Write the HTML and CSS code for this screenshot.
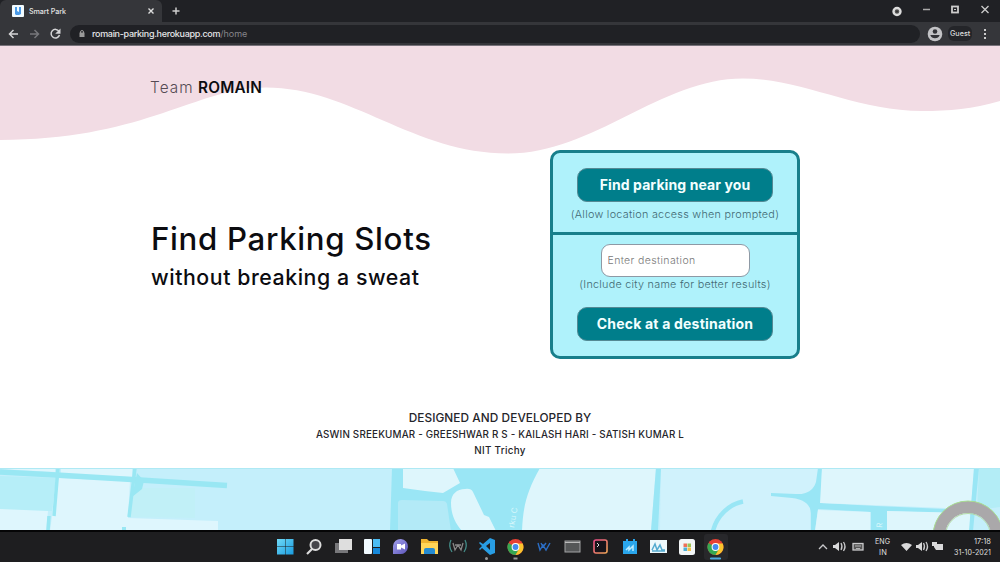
FILE: index.html
```html
<!DOCTYPE html>
<html lang="en">
<head>
<meta charset="utf-8">
<title>Smart Park</title>
<link rel="stylesheet" href="styles.css">
</head>
<body>
<div class="tabs">
  <div class="tab">
    <svg class="favicon" width="12" height="12" viewBox="0 0 12 12"><rect width="12" height="12" rx="1" fill="#f2fbff"/><path d="M3 2h2v4l2 1V2h2v7l-2 1H4L3 9z" fill="#4b9be8"/></svg>
    <span class="tab-title">Smart Park</span>
    <svg width="8" height="8" viewBox="0 0 8 8"><path d="M1.500 1.500l5 5M6.500 1.500l-5 5" stroke="#ddd" stroke-width="1.400"/></svg>
  </div>
  <svg class="plus" width="10" height="10" viewBox="0 0 10 10"><path d="M5 1.500v7M1.500 5h7" stroke="#ccc" stroke-width="1.500"/></svg>
  <svg class="controls" width="108" height="22" viewBox="0 0 108 22"><circle cx="5" cy="11.500" r="3.500" fill="#555" stroke="#ddd" stroke-width="2.400"/><circle cx="5" cy="11.500" r="1" fill="#333"/><path d="M31 9.500h7" stroke="#aaa" stroke-width="1.500"/><rect x="60" y="6.500" width="6" height="6" fill="none" stroke="#ccc" stroke-width="1.800"/><path d="M62 9.500h2" stroke="#ccc"/><path d="M89.500 6l7 7M96.500 6l-7 7" stroke="#ccc" stroke-width="1.300"/></svg>
</div>
<div class="toolbar">
  <svg class="nav" width="64" height="24" viewBox="0 0 64 24"><g fill="none" stroke="#d5d5d7" stroke-width="1.500"><path d="M19 12h-8M14.500 8L10.500 12l4 4"/><path stroke="#77777b" d="M31 12h8M35.500 8l4 4-4 4"/><path d="M60 9.300A4.300 4.300 0 1 0 60.500 13"/></g><path d="M61.500 6.500v5.300h-5.300z" fill="#d5d5d7"/></svg>
  <div class="address">
    <svg width="8" height="9" viewBox="0 0 8 9"><path d="M2.500 4V3a1.500 1.500 0 0 1 3 0v1" fill="none" stroke="#999"/><rect x="1.500" y="3.500" width="5" height="4.500" fill="#999"/></svg>
    <span class="host">romain-parking.herokuapp.com</span><span class="path">/home</span>
  </div>
  <svg class="avatar" width="16" height="16" viewBox="0 0 16 16"><circle cx="8" cy="8" r="7.300" fill="#c3c3c6"/><circle cx="8" cy="5.500" r="2.300" fill="#333338"/><path d="M3.300 9h9.400a5 5 0 0 1-9.400 0z" fill="#333338"/></svg>
  <span class="guest">Guest</span>
  <svg class="dots" width="4" height="12" viewBox="0 0 4 12"><path d="M1 1h2v2H1zM1 5h2v2H1zM1 9h2v2H1z" fill="#ccc"/></svg>
</div>
<main class="page">
  <svg class="wave" width="1000" height="110" viewBox="0 46 1000 110"><path fill="#f2dce4" d="M0 45H1000V101C972 109 950 111 922 111C855 111 802 78.500 743 78.500C660 78.500 594 153.500 508 153.500C413 153.500 351 87.500 266 87.500C196 87.500 145 140 0 140Z"/></svg>
  <header class="brand"><span class="team">Team</span> <b class="name">ROMAIN</b></header>
  <section class="hero">
    <div class="headline">
      <h1 class="title">Find Parking Slots</h1>
      <p class="subtitle">without breaking a sweat</p>
    </div>
    <div class="card">
      <div class="near">
        <button class="btn"><span class="find">Find parking near you</span></button>
        <p class="hint allow">(Allow location access when prompted)</p>
      </div>
      <div class="search">
        <input class="field" placeholder="Enter destination">
        <p class="hint include">(Include city name for better results)</p>
        <button class="btn"><span class="check">Check at a destination</span></button>
      </div>
    </div>
  </section>
  <footer class="credits">
    <p class="designed">DESIGNED AND DEVELOPED BY</p>
    <p class="people">ASWIN SREEKUMAR - GREESHWAR R S - KAILASH HARI - SATISH KUMAR L</p>
    <p class="school">NIT Trichy</p>
  </footer>
  <svg class="map" width="1000" height="62" viewBox="0 468 1000 62">
    <rect y="468" width="1000" height="63" fill="#c4effb"/>
    <path d="M0 476L56 478L52 511H0z" fill="#b6eef8"/>
    <path d="M0 509L48 511L46 531H0zM52 516L56 478L130 481L128 518L218 521V531H50zM0 468H55V472L0 469zM61 468H132V477L61 474z" fill="#def6fd"/>
    <path d="M134 488L195 488L195 518L130 517z" fill="#c1f0f7"/>
    <path d="M0 472L56 475L132 479.500L227 485.500" fill="none" stroke="#99e7f3" stroke-width="5.500"/>
    <path d="M58 468L54 516M49 516L48 531M135 468L129 517" fill="none" stroke="#99e7f3" stroke-width="3.500"/>
    <path d="M137 473L144 481L142 489L132 497zM122 527h4v4h-4z" fill="#99e7f3"/>
    <path d="M392 468H540L522 531H390z" fill="#9ae6f5"/>
    <path d="M398 503Q398 500 402 500L443 501Q446 501 447 504L451 531H398z" fill="#b3eaf7"/>
    <path d="M403 468H453L460 483L443 493L425 491L403 488zM451 503C451 494 457 489 465 489Q471 488 473 492L484 515L489 517L496 531H462C455 523 451 514 451 503zM540 468H656L651 531H522C523 506 527 491 540 468z" fill="#def6fc"/>
    <path d="M661 468H818V486Q818 493 810 497V531H660z" fill="#d0f2fc"/>
    <path d="M656 468H661L658 531H651z" fill="#99e6f5"/>
    <path d="M713 531C717 515 730 504 743 501.500" fill="none" stroke="#99e6f5" stroke-width="4.500"/>
    <path d="M771 493L796 494Q812 495 816 482L818 468H822L821 503L876 506L945 509V513L887 511V531H871V512L818 509L815 531H811V513Q810 500 792 498L771 496z" fill="#99e6f5"/>
    <path d="M822 468H974L971 509L820 503zM818 510L870 512V531H815zM887 511L970 513V531H887z" fill="#def6fc"/>
    <path d="M979 468H1000V507L977 510z" fill="#b3edf6"/>
    <path d="M974 468H979L973 531H969z" fill="#99e6f5"/>
    <path d="M0 468.500H1000" stroke="#aee9f4"/>
    <g fill="#d5f6fb" font-family="Inter, sans-serif" font-size="8"><text transform="translate(514 528) rotate(-80)">rku C</text><text transform="translate(882 528) rotate(-85)">R</text></g>
    <circle cx="968" cy="536" r="29" fill="none" stroke="#aaa8aa" stroke-width="12"/>
    <circle cx="968" cy="536" r="35" fill="none" stroke="#a8dd90" stroke-width="1"/><circle cx="968" cy="536" r="22.500" fill="none" stroke="#b4d9a6" stroke-width="1"/>
  </svg>
</main>
<div class="taskbar">
  <svg width="1000" height="32" viewBox="0 530 1000 32">
    <defs>
      <linearGradient id="win" x2="1" y2="1"><stop stop-color="#70daf7"/><stop offset="1" stop-color="#199bdf"/></linearGradient>
      <linearGradient id="chat" x2="1" y2="1"><stop stop-color="#a3a1ec"/><stop offset="1" stop-color="#5c55b9"/></linearGradient>
      <linearGradient id="ide" x2="1" y2="1"><stop stop-color="#e94c87"/><stop offset="1" stop-color="#efa557"/></linearGradient>
      <g id="chrome"><circle r="8" fill="#e64134"/><path d="M0 0L-7 -4A8 8 0 0 0 0 8L4 2z" fill="#36a852"/><path d="M0 -3.500H7.200A8 8 0 0 1 0 8L3.500 2z" fill="#fbc42d"/><circle r="3.900" fill="#fff"/><circle r="2.900" fill="#438bed"/></g>
    </defs>
    <rect y="530" width="1000" height="2" fill="#050506"/>
    <path d="M277 539h8v7h-8zM285.500 539h8v7h-8zM277 546.500h8v8h-8zM285.500 546.500h8v8h-8z" fill="url(#win)"/>
    <circle cx="315.500" cy="545" r="5" fill="#45454a" stroke="#ddd" stroke-width="2"/><path d="M312 549l-5 5" stroke="#ddd" stroke-width="2.200"/>
    <rect x="335" y="543" width="13" height="10" fill="#77777a"/><rect x="339" y="539" width="13" height="11" fill="#dedede"/>
    <rect x="364" y="539" width="8" height="15" rx="1" fill="#f1faff"/><rect x="373" y="539" width="7" height="8" fill="#4dbdf4"/><rect x="373" y="548" width="7" height="6" fill="#1689db"/>
    <path d="M393 554V546A7.500 7.500 0 1 1 400 554z" fill="url(#chat)"/><path d="M397 544h4v1.500l4-2v6l-4-2v2h-4z" fill="#fff"/>
    <path d="M421 539h6l2 2h9v13h-17z" fill="#eeb330"/><path d="M421 543h17v11h-17z" fill="#ffd558"/><path d="M424 554v-4q0-2 2-2h7q2 0 2 2v4z" fill="#258bd1"/>
    <g fill="none" stroke="#438c88" stroke-width="1.300"><path d="M451 540q-3 6 1 12M465 540q3 6-1 12"/><path stroke="#888" d="M453 543l2 7 3-5 3 5 2-7M455 545h6"/></g>
    <path d="M490 538l5 2v13l-5 2-8-7-2 2-1-1 3-3-3-3 1-1 3 2zm0 5l-4 3 4 4z" fill="#289de3"/><circle cx="486.500" cy="558.500" r="1.500" fill="#999"/>
    <use href="#chrome" x="515.500" y="547"/><path d="M513.500 558.500h4" stroke="#999" stroke-width="2"/>
    <path d="M538 543l2 7 3-5 3 5 4-7M541 543l2 4 3-4" fill="none" stroke="#2b6dc4" stroke-width="1.400"/>
    <rect x="565" y="541" width="15" height="11" fill="#555758" stroke="#a2a3a4"/><path d="M565 542.500h15" stroke="#bbb"/>
    <rect x="594" y="540" width="13" height="13" rx="2" fill="#17131a" stroke="url(#ide)" stroke-width="1.600"/><path d="M597 543l2 2-2 2" stroke="#ddd" fill="none"/>
    <path d="M623 541h3v-2h2v2h5v-2h2v2h2v13h-14z" fill="#2aa6ec"/><path d="M626 550l3-3v3l4-4v5" stroke="#bbecff" fill="none" stroke-width="1.500"/>
    <rect x="650" y="540" width="17" height="13" fill="#edf8fb"/><path d="M652 550l3-6 2 6 3-5 2 5h3M652 551h13" stroke="#55abd0" stroke-width="1.500" fill="none"/>
    <rect x="679" y="539" width="16" height="16" rx="2.500" fill="#f2f5f6"/><path d="M683.500 543.500h3.500v3.500h-3.500z" fill="#ef7058"/><path d="M687.500 543.500h3.500v3.500h-3.500z" fill="#9cc253"/><path d="M683.500 547.500h3.500v3.500h-3.500z" fill="#4eaed5"/><path d="M687.500 547.500h3.500v3.500h-3.500z" fill="#f1bf48"/>
    <rect x="704" y="534" width="24" height="26" rx="3" fill="#28282b"/><use href="#chrome" x="715.500" y="547"/><path d="M711 558.500h9" stroke="#4ea8dd" stroke-width="2.200" stroke-linecap="round"/>
    <g fill="none" stroke="#c9c9cb" stroke-width="1.300"><path d="M819 549l4-4 4 4"/><path d="M841 543q2 3.500 0 7M843.500 542q3 4.500 0 9"/><rect x="853" y="543.500" width="10" height="6.500" fill="#555"/><path d="M855 546h6M856 548.500h4" stroke-width=".8"/><path d="M923.500 543q2 3.500 0 7M926 542q3 4.500 0 9"/></g>
    <path d="M833 545h2l4-3v9l-4-3h-2zM916 545h2l4-3v9l-4-3h-2zM901 545q5.500-4 11 0l-5.500 6zM934 544h9v6h-7l-2-3zM932 542h5v4h-5z" fill="#d9d9da"/>
    <g class="tray"><text x="875" y="544" textLength="15" lengthAdjust="spacingAndGlyphs">ENG</text><text x="879" y="555" textLength="8">IN</text><text x="974" y="544" textLength="17" lengthAdjust="spacingAndGlyphs">17:18</text><text x="954" y="555" textLength="37" lengthAdjust="spacingAndGlyphs">31-10-2021</text></g>
  </svg>
</div>
</body>
</html>
```

FILE: styles.css
```css
* { box-sizing: border-box; }
body { margin: 0; width: 1000px; height: 562px; overflow: hidden; display: flex; flex-direction: column; font-family: Inter, "Liberation Sans", sans-serif; background: #fff; color: #0c0c10; }
p, h1 { margin: 0; white-space: nowrap; }
svg { display: block; flex: none; }
.tabs { flex: 0 0 22px; display: flex; align-items: center; background: #202125; }
.tab { width: 162px; height: 22px; display: flex; align-items: center; padding: 0 7px 0 12px; background: #35363a; border-radius: 6px 6px 0 0; }
.tab-title { flex: 1; margin-left: 5px; color: #e4e4e4; font-size: 7.2px; font-weight: 500; letter-spacing: -.1px; }
.plus { margin-left: 9px; }
.controls { margin-left: auto; }
.toolbar { flex: 0 0 24px; height: 24px; display: flex; align-items: center; background: #35363a; border-bottom: 1px solid #77727a; }
.nav { margin-right: 7px; margin-left: -1px; }
.address { width: 850px; height: 18px; display: flex; align-items: center; padding-left: 8px; background: #202125; border-radius: 9px; font-size: 9px; }
.host { margin-left: 6px; color: #e6e6e8; font-weight: 500; letter-spacing: -.3px; }
.path { color: #85858a; }
.avatar { margin-left: 7px; }
.guest { margin-left: 5px; padding: 3px 2px; background: #242529; border-radius: 6px; color: #ddd; font-size: 7.2px; font-weight: 500; }
.dots { margin-left: auto; margin-right: 13px; }
.page { flex: 0 0 484px; position: relative; display: flex; flex-direction: column; }
.wave { position: absolute; inset: 0 auto auto 0; z-index: -1; }
.brand { height: 104px; padding: 32px 0 0 150px; font-size: 15.3px; line-height: 20px; white-space: nowrap; }
.team { color: #554b54; font-weight: 300; letter-spacing: 1.1px; }
.name { font-weight: 600; letter-spacing: .2px; }
.hero { height: 209px; display: flex; justify-content: space-between; padding: 0 200px 0 151px; }
.headline { padding-top: 68px; }
.title { font-size: 31.2px; line-height: 42px; font-weight: 550; letter-spacing: .68px; }
.subtitle { padding-top: 4px; font-size: 21.3px; line-height: 26px; font-weight: 550; letter-spacing: .56px; }
.card { width: 250px; height: 209px; border: 3px solid #187f8b; border-radius: 10px; background: #aff2fb; }
.near, .search { display: flex; flex-direction: column; align-items: center; }
.near { height: 82px; padding-top: 15px; border-bottom: 3px solid #187f8b; }
.search { padding-top: 9px; }
.btn { width: 196px; height: 34px; flex: none; padding: 0 0 2px; border: 1px solid #548a94; border-radius: 10px; background: #007e8b; color: #f3ffff; font: 700 14px Inter, sans-serif; white-space: nowrap; }
.find { letter-spacing: .1px; }
.check { letter-spacing: .2px; }
.hint { font-size: 10.8px; line-height: 15px; font-weight: 300; color: #416872; }
.allow { margin-top: 5px; letter-spacing: .28px; }
.field { width: 149px; height: 33px; border: 1px solid #8e99a5; border-radius: 9px; padding: 0 6px; background: #fff; font: 300 10.5px Inter, sans-serif; letter-spacing: .38px; }
.field::placeholder { color: #777; opacity: 1; }
.include { margin-bottom: 15px; letter-spacing: .26px; }
.credits { height: 109px; padding-top: 51px; text-align: center; font-weight: 500; color: #25252a; }
.designed { font-size: 11.8px; line-height: 16px; letter-spacing: .08px; }
.people { font-size: 9.8px; line-height: 17px; letter-spacing: .2px; }
.school { font-size: 9.8px; line-height: 16px; letter-spacing: .3px; }
.taskbar { flex: 0 0 32px; background: #1e1e20; }
.tray { fill: #dedede; font-size: 7.5px; }
```
